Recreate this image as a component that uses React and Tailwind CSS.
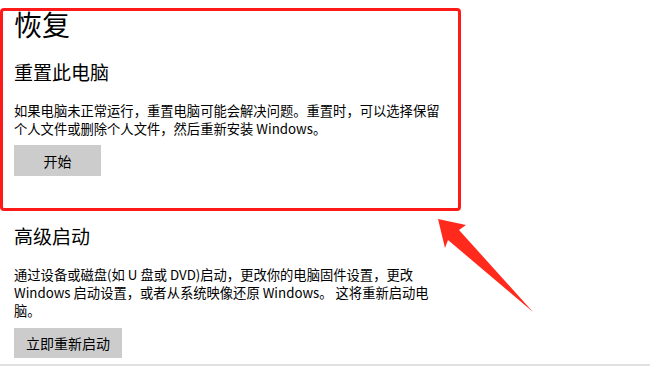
import React from 'react';

const font = { fontFamily: '"Segoe UI", "Noto Sans CJK SC", "Noto Sans", sans-serif' };

const App = () => {
  return (
    <div
      className="relative w-[650px] h-[366px] bg-white text-black overflow-hidden"
      style={font}
    >
      {/* highlighted section */}
      <div className="mt-[8px] w-[461px] h-[203px] border-[3px] border-[#ff1a1a] rounded-[4px] pl-[11px]">
        <h1 className="text-[28px] leading-[28px] font-normal -mt-[1px]">恢复</h1>
        <h2 className="mt-[24px] text-[19px] leading-[19px] font-normal">重置此电脑</h2>
        <p className="mt-[21px] text-[13.3px] leading-[18px] whitespace-nowrap">
          如果电脑未正常运行，重置电脑可能会解决问题。重置时，可以选择保留
          <br />
          个人文件或删除个人文件，然后重新安装 Windows。
        </p>
        <button className="mt-[7px] w-[87px] h-[31px] bg-[#cccccc] text-[14px] leading-none">
          开始
        </button>
      </div>

      <div className="pl-[14px]">
        <h2 className="mt-[15px] text-[19px] leading-[19px] font-normal">高级启动</h2>
        <p className="mt-[21px] text-[13.3px] leading-[18px] whitespace-nowrap">
          通过设备或磁盘(如 U 盘或 DVD)启动，更改你的电脑固件设置，更改
          <br />
          Windows 启动设置，或者从系统映像还原 Windows。 这将重新启动电
          <br />
          脑。
        </p>
        <button className="mt-[8px] w-[108px] h-[30px] bg-[#cccccc] text-[14px] leading-none">
          立即重新启动
        </button>
      </div>

      <div className="absolute left-0 right-0 bottom-0 h-[2px] bg-[#e1e1e1]" />

      {/* annotation arrow */}
      <svg className="absolute left-0 top-0" width="650" height="366" viewBox="0 0 650 366">
        <polygon
          points="438,219 466,225 459,230 533,312 448,240 445,248"
          fill="#ff2a1c"
        />
      </svg>
    </div>
  );
};

export default App;
